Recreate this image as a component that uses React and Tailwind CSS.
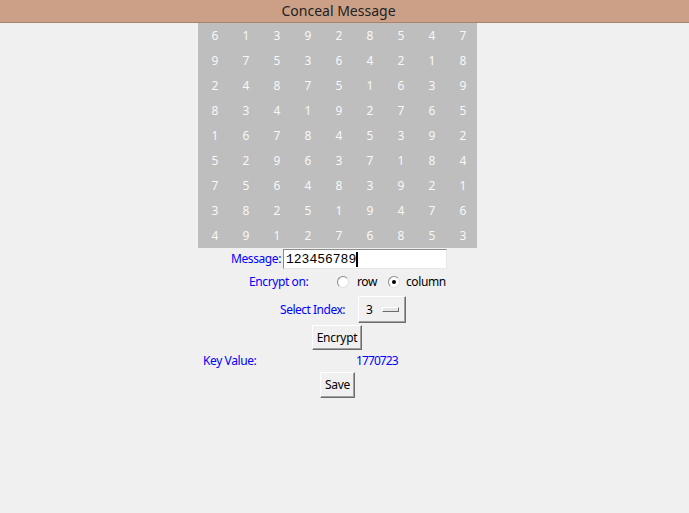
import React from "react";

const grid = [
  [6, 1, 3, 9, 2, 8, 5, 4, 7],
  [9, 7, 5, 3, 6, 4, 2, 1, 8],
  [2, 4, 8, 7, 5, 1, 6, 3, 9],
  [8, 3, 4, 1, 9, 2, 7, 6, 5],
  [1, 6, 7, 8, 4, 5, 3, 9, 2],
  [5, 2, 9, 6, 3, 7, 1, 8, 4],
  [7, 5, 6, 4, 8, 3, 9, 2, 1],
  [3, 8, 2, 5, 1, 9, 4, 7, 6],
  [4, 9, 1, 2, 7, 6, 8, 5, 3],
];

function Radio({ checked }) {
  return (
    <span className="relative flex h-[12px] w-[12px] items-center justify-center rounded-full border border-t-[#8a8a8a] border-l-[#8a8a8a] border-b-[#e0e0e0] border-r-[#e0e0e0] bg-white">
      {checked && <span className="h-[4px] w-[4px] rounded-full bg-black" />}
    </span>
  );
}

function TkButton({ children, className }) {
  return (
    <button
      className={
        "flex items-center justify-center border border-t-white border-l-white border-b-[#6d6d6d] border-r-[#6d6d6d] bg-[#f0f0f0] text-[12px] tracking-[-0.3px] text-black shadow-[inset_-1px_-1px_0_#a0a0a0] " +
        className
      }
    >
      {children}
    </button>
  );
}

export default function App() {
  return (
    <div
      className="flex min-h-[513px] w-full flex-col bg-[#f0f0f0]"
      style={{ fontFamily: '"Noto Sans", "Open Sans", sans-serif' }}
    >
      <div className="h-[23px] border-b border-[#a8826a] bg-[#cba087] pr-[12px] text-center text-[14px] leading-[22px] text-[#222]">
        Conceal Message
      </div>

      <div className="pl-[198px]">
        <div className="grid w-[279px] grid-cols-9 bg-[#bebebe]">
          {grid.flat().map((n, i) => (
            <div
              key={i}
              className="flex h-[25px] items-center justify-center pl-[3px] text-[12px] text-[#f8f8f8]"
            >
              {n}
            </div>
          ))}
        </div>
      </div>

      <div className="flex h-[22px] items-center pl-[198px]">
        <span className="w-[83px] text-right text-[12px] tracking-[-0.4px] text-[#0000ff]">Message:</span>
        <div className="ml-[2px] flex h-[20px] w-[164px] items-center border border-t-[#8c8c8c] border-l-[#8c8c8c] border-b-[#e8e8e8] border-r-[#e8e8e8] bg-white pl-[2px]">
          <span
            className="text-[13px] leading-none text-black"
            style={{ fontFamily: '"Liberation Mono", monospace' }}
          >
            123456789
          </span>
          <span className="h-[15px] w-[2px] bg-black" />
        </div>
      </div>

      <div className="flex h-[24px] items-center pl-[249px] text-[12px] tracking-[-0.4px]">
        <span className="w-[88px] text-[#0000ff]">Encrypt on:</span>
        <Radio />
        <span className="ml-[8px] w-[31px] text-black">row</span>
        <Radio checked />
        <span className="ml-[6px] text-black">column</span>
      </div>

      <div className="flex h-[31px] items-center pl-[270px]">
        <span className="w-[75px] text-right text-[12px] tracking-[-0.5px] text-[#0000ff]">Select Index:</span>
        <TkButton className="ml-[13px] h-[27px] w-[48px] justify-start pl-[7px]">
          <span>3</span>
          <span className="ml-[9px] h-[5px] w-[17px] border border-t-white border-l-white border-b-[#6d6d6d] border-r-[#6d6d6d] bg-[#e6e6e6]" />
        </TkButton>
      </div>

      <div className="pl-[312px]">
        <TkButton className="h-[25px] w-[50px]">Encrypt</TkButton>
      </div>

      <div className="flex h-[22px] items-center pl-[203px] text-[12px] text-[#0000ff]">
        <span className="w-[153px] tracking-[-0.4px]">Key Value:</span>
        <span className="tracking-[-0.9px]">1770723</span>
      </div>

      <div className="pl-[320px]">
        <TkButton className="h-[26px] w-[35px]">Save</TkButton>
      </div>
    </div>
  );
}
